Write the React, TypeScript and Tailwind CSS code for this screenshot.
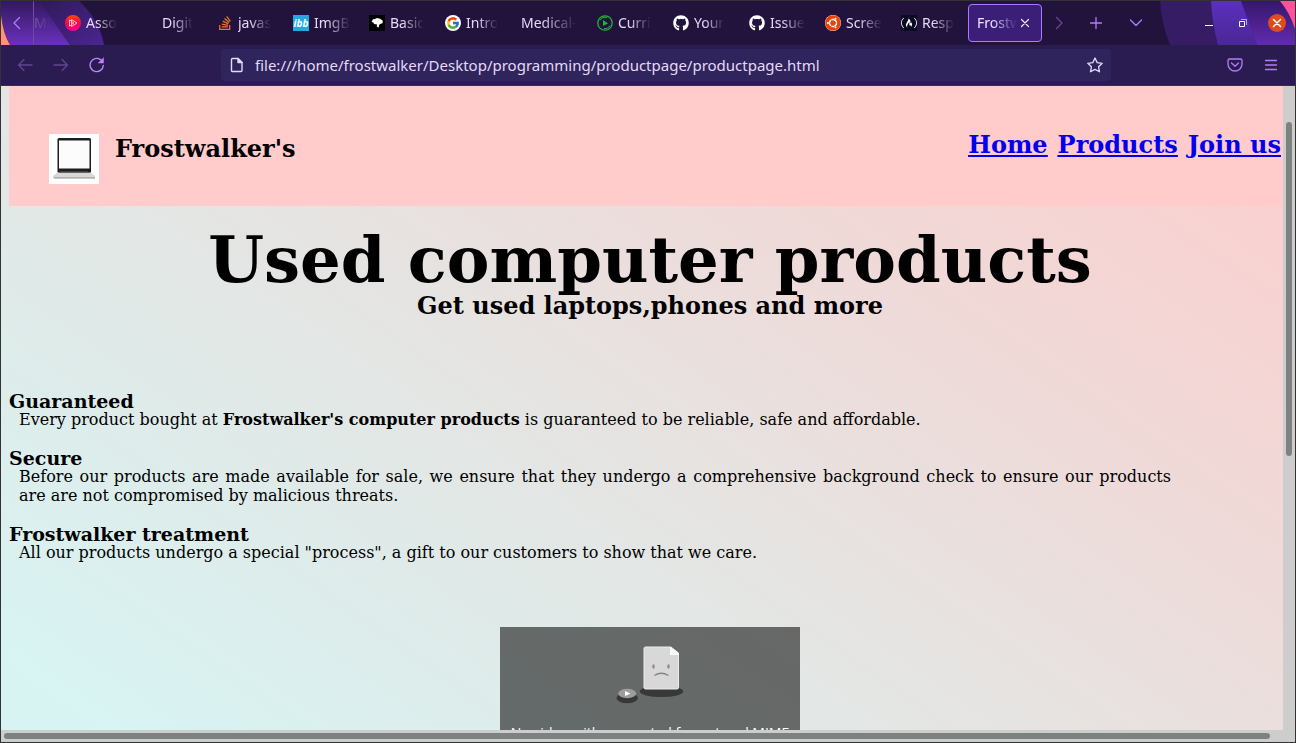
import type { ReactNode } from "react";
import { FaFreeCodeCamp, FaGithub, FaStackOverflow, FaUbuntu } from "react-icons/fa";
import { FcGoogle } from "react-icons/fc";

type Tab = { title: string; icon?: ReactNode; iconSlot?: boolean };

const strokeProps = {
  fill: "none",
  stroke: "currentColor",
  strokeLinecap: "round" as const,
  strokeLinejoin: "round" as const,
};

function PlayBadge() {
  return (
    <svg viewBox="0 0 16 16" className="size-4">
      <defs>
        <linearGradient id="play-badge" x1="0" y1="0" x2="0" y2="1">
          <stop offset="0" stopColor="#ff4a00" />
          <stop offset="0.5" stopColor="#ff0450" />
          <stop offset="1" stopColor="#fb0090" />
        </linearGradient>
      </defs>
      <circle cx="8" cy="8" r="8" fill="url(#play-badge)" />
      <path d="M4.500 5v6M6.500 4.500v7L12 8zM6.500 6.500 9 8 6.500 9.500M4.500 5l2 1M4.500 11l2-1" fill="none" stroke="#ffc7cf" strokeWidth="1" />
    </svg>
  );
}

function HeadBadge() {
  return (
    <svg viewBox="0 0 16 16" className="size-4">
      <rect width="16" height="16" fill="#000" />
      <path d="M2.500 7 4 4.300 6 4l2-1 3 .8 2.800 2-.3 2.400-2.500.8-1 1.200-.2 2.300-2-.8L8 9.600 5 9l-.5-1.500z" fill="#fff" />
    </svg>
  );
}

function GreenBadge() {
  return (
    <svg viewBox="0 0 16 16" className="size-4" fill="none" stroke="#22b53a">
      <circle cx="8" cy="8" r="7.200" strokeWidth="1.300" />
      <path d="M3 5a6 6 0 0 1 7-2.300M13 10.500a6 6 0 0 1-6 3" strokeWidth="1" />
      <path d="M6 5v6l5-2.500z" fill="#22b53a" stroke="none" />
    </svg>
  );
}

const tabs: Tab[] = [
  { title: "Asso", icon: <PlayBadge /> },
  { title: "Digit", iconSlot: true },
  { title: "javas", icon: <FaStackOverflow className="size-4 text-[#e87722]" /> },
  {
    title: "ImgB",
    icon: (
      <span className="flex size-4 items-center justify-center bg-[#23a8e0] text-[10px] font-bold italic leading-none text-white">
        ibb
      </span>
    ),
  },
  { title: "Basic", icon: <HeadBadge /> },
  {
    title: "Intro",
    icon: (
      <span className="flex size-4 items-center justify-center rounded-full bg-white">
        <FcGoogle className="size-[14px]" />
      </span>
    ),
  },
  { title: "Medical-" },
  { title: "Curri", icon: <GreenBadge /> },
  { title: "Your", icon: <FaGithub className="size-4 text-white" /> },
  { title: "Issue", icon: <FaGithub className="size-4 text-white" /> },
  {
    title: "Scree",
    icon: (
      <span className="size-4 rounded-full bg-white">
        <FaUbuntu className="size-4 text-[#e8430c]" />
      </span>
    ),
  },
  {
    title: "Resp",
    icon: (
      <span className="flex size-4 items-center justify-center bg-[#0a0a23]">
        <FaFreeCodeCamp className="size-4 text-white" />
      </span>
    ),
  },
];

const fade = "[mask-image:linear-gradient(to_right,black_35%,transparent)]";

function ThemeArt() {
  return (
    <div aria-hidden="true" className="absolute inset-0 flex justify-between overflow-hidden">
      <svg viewBox="0 0 130 85" className="h-[85px] w-[130px]">
        <defs>
          <linearGradient id="art-left" x1="0" y1="0" x2="0" y2="1">
            <stop offset="0" stopColor="#32185f" />
            <stop offset="1" stopColor="#6a31bc" />
          </linearGradient>
          <linearGradient id="art-mid" x1="0" y1="0" x2="1" y2="1">
            <stop offset="0" stopColor="#301959" />
            <stop offset="1" stopColor="#4b2591" />
          </linearGradient>
        </defs>
        <path d="M37 0h41q20 18 25 44H69z" fill="url(#art-mid)" />
        <path d="M0 0h38l31 44H9Q2 30 0 14z" fill="url(#art-left)" />
        <path d="M0 14q2 18 9 30H0z" fill="#ff9178" />
      </svg>
      <svg viewBox="0 0 145 85" className="h-[85px] w-[145px]">
        <defs>
          <linearGradient id="art-right" x1="0" y1="0" x2="0" y2="1">
            <stop offset="0" stopColor="#35176c" />
            <stop offset="1" stopColor="#622bb0" />
          </linearGradient>
          <linearGradient id="art-band" x1="0" y1="0" x2="0" y2="1">
            <stop offset="0" stopColor="#5b30bd" />
            <stop offset="1" stopColor="#4a2796" />
          </linearGradient>
        </defs>
        <path d="M10 0h55l8 44H20Q11 21 10 0z" fill="#351c65" />
        <path d="M61 0h31l15 44H68Q62 22 61 0z" fill="url(#art-band)" />
        <path d="M91 0h54v44h-38z" fill="url(#art-right)" />
        <path d="M130 0h15v28q-5-16-15-28z" fill="#ff5299" />
      </svg>
    </div>
  );
}

function TabBar() {
  return (
    <div className="relative flex h-11 items-center bg-[#22133d]">
      <ThemeArt />
      <button aria-label="Scroll tabs left" className="relative flex h-11 w-8 items-center justify-center text-[#b47bff]">
        <svg viewBox="0 0 16 16" className="size-4" strokeWidth="1.300" {...strokeProps}>
          <path d="M10.500 2.500 5 8l5.500 5.500" />
        </svg>
      </button>
      <div className="relative flex h-11 w-[23px] shrink-0 items-center border-l border-[#6f4d9e] text-sm text-[#7a5ca8]">
        <span className="[mask-image:linear-gradient(to_right,black,transparent)]">Mi</span>
      </div>
      <div role="tablist" className="relative flex items-center">
        {tabs.map((tab) => (
          <button key={tab.title} role="tab" aria-selected="false" className="flex h-10 w-[76px] shrink-0 items-center gap-[5px] px-[9px]">
            {(tab.icon || tab.iconSlot) && <span className="flex size-4 shrink-0">{tab.icon}</span>}
            <span className={`whitespace-nowrap text-left text-sm text-[#e4daf7] ${fade}`}>{tab.title}</span>
          </button>
        ))}
        <div role="tab" aria-selected="true" className="flex h-[38px] w-[74px] shrink-0 items-center rounded border border-[#b077ff] bg-[#3a1e78] pl-2">
          <span className={`w-10 whitespace-nowrap text-sm text-[#f0e8ff] ${fade}`}>Frostw</span>
          <button aria-label="Close tab" className="flex size-4 items-center justify-center text-[#f0e8ff]">
            <svg viewBox="0 0 16 16" className="size-4" strokeWidth="1.200" {...strokeProps}>
              <path d="m4.500 4.500 7 7m0-7-7 7" />
            </svg>
          </button>
        </div>
      </div>
      <div className="relative flex flex-1 items-center text-[#b47bff]">
        <button aria-label="Scroll tabs right" className="flex w-[34px] justify-center text-[#6b4699]">
          <svg viewBox="0 0 16 16" className="size-4" strokeWidth="1.300" {...strokeProps}>
            <path d="m5.500 2.500 5.500 5.500-5.500 5.500" />
          </svg>
        </button>
        <button aria-label="New tab" className="flex w-10 justify-center">
          <svg viewBox="0 0 16 16" className="size-4" strokeWidth="1.300" {...strokeProps}>
            <path d="M8 2.500v11M2.500 8h11" />
          </svg>
        </button>
        <button aria-label="List all tabs" className="flex w-10 justify-center">
          <svg viewBox="0 0 16 16" className="size-4" strokeWidth="1.300" {...strokeProps}>
            <path d="m2.500 5 5.500 5.500L13.500 5" />
          </svg>
        </button>
      </div>
      <div className="relative flex items-center gap-4 pr-[9px] text-white">
        <button aria-label="Minimize" className="flex size-[18px] items-center justify-center">
          <svg viewBox="0 0 18 18" className="size-[18px]"><path d="M5 11.500h8" stroke="currentColor" /></svg>
        </button>
        <button aria-label="Restore" className="flex size-[18px] items-center justify-center">
          <svg viewBox="0 0 18 18" className="size-[18px]" fill="none" stroke="currentColor">
            <path d="M5.500 7.500h5v5h-5z" />
            <path d="M7 5.500h5.500V11" opacity=".6" />
          </svg>
        </button>
        <button aria-label="Close window" className="flex size-[18px] items-center justify-center rounded-full bg-[#e14a1a]">
          <svg viewBox="0 0 18 18" className="size-[18px]" strokeWidth="1.500" {...strokeProps}>
            <path d="m5.500 5.500 7 7m0-7-7 7" />
          </svg>
        </button>
      </div>
    </div>
  );
}

function Toolbar() {
  return (
    <div className="flex h-[41px] items-center border-b border-[#3b2668] bg-[#2a1c50] text-[#b47bff]">
      <div className="flex w-[220px] shrink-0 items-center gap-5 pl-4">
        <button aria-label="Back" className="text-[#63458f]">
          <svg viewBox="0 0 16 16" className="size-4" strokeWidth="1.300" {...strokeProps}>
            <path d="M15 8H1.500M7 2.500 1.500 8 7 13.500" />
          </svg>
        </button>
        <button aria-label="Forward" className="text-[#63458f]">
          <svg viewBox="0 0 16 16" className="size-4" strokeWidth="1.300" {...strokeProps}>
            <path d="M1 8h13.500M9 2.500 14.500 8 9 13.500" />
          </svg>
        </button>
        <button aria-label="Reload" className="text-[#bd84ff]">
          <svg viewBox="0 0 16 16" className="size-4" strokeWidth="1.400" {...strokeProps}>
            <path d="M14.300 8.500A6.600 6.600 0 1 1 11.500 2.600L13 4" />
            <path d="M14.500 1v5h-5z" fill="currentColor" strokeWidth=".5" />
          </svg>
        </button>
      </div>
      <div className="flex h-8 min-w-0 flex-1 items-center rounded bg-[#2f245b] px-2 text-[#e4daf7]">
        <svg viewBox="0 0 16 16" className="size-4 shrink-0" strokeWidth="1.400" {...strokeProps}>
          <path d="M3.500 1.500H9L13 5.500v8a1 1 0 0 1-1 1H3.500a1 1 0 0 1-1-1v-11a1 1 0 0 1 1-1z" />
          <path d="M9 1.500v4h4z" fill="currentColor" />
        </svg>
        <input
          aria-label="Address"
          defaultValue="file:///home/frostwalker/Desktop/programming/productpage/productpage.html"
          className="ml-[10px] min-w-0 flex-1 bg-transparent text-[15px] outline-none"
        />
        <button aria-label="Bookmark this page">
          <svg viewBox="0 0 16 16" className="size-4" strokeWidth="1.300" {...strokeProps}>
            <path d="m8 1 2.200 4.600 5 .7-3.600 3.500.9 5L8 12.400l-4.500 2.400.9-5L.8 6.300l5-.7z" />
          </svg>
        </button>
      </div>
      <div className="flex w-[184px] shrink-0 items-center justify-end gap-5 pr-4">
        <button aria-label="Save to Pocket">
          <svg viewBox="0 0 16 16" className="size-4" strokeWidth="1.300" {...strokeProps}>
            <path d="M2.500 2h11a1.500 1.500 0 0 1 1.500 1.500V7A7 7 0 0 1 1 7V3.500A1.500 1.500 0 0 1 2.500 2z" />
            <path d="M4.500 6 8 9.200 11.500 6" />
          </svg>
        </button>
        <button aria-label="Open application menu">
          <svg viewBox="0 0 16 16" className="size-4" strokeWidth="1.300" {...strokeProps}>
            <path d="M2.500 3.500h11M2.500 8h11M2.500 12.500h11" />
          </svg>
        </button>
      </div>
    </div>
  );
}

function LaptopLogo() {
  return (
    <svg viewBox="0 0 50 50" className="size-[50px]" role="img" aria-label="Laptop">
      <rect width="50" height="50" fill="#fff" />
      <rect x="8.500" y="4" width="33.500" height="35" rx="1.500" fill="#1d1d1d" />
      <rect x="10" y="6.500" width="30.500" height="28" fill="#fcfcfc" />
      <path d="M8.500 38.500h33l4.500 3.500v2H4v-2z" fill="#d8d8d8" />
      <path d="M11 37.500h28l1 1.500H10z" fill="#666" />
      <path d="M5 44h41" stroke="#777" strokeWidth=".8" />
    </svg>
  );
}

function SadFile() {
  return (
    <svg viewBox="0 0 68 60" className="h-[60px] w-[68px]" aria-hidden="true">
      <ellipse cx="45.500" cy="46.500" rx="21.700" ry="5.500" fill="#383838" />
      <path d="M30 2h25l7.500 6v34.500a1.500 1.500 0 0 1-1.500 1.500H29.500a1.500 1.500 0 0 1-1.500-1.500V3.500A1.500 1.500 0 0 1 29.500 2z" fill="#d8d8d8" stroke="#ececec" strokeWidth="1" />
      <path d="M54 2v8h9z" fill="#fafafa" />
      <path d="M54 2v8h8.500V8z" fill="#fafafa" />
      <ellipse cx="37.500" cy="21.500" rx="1.200" ry="2.200" fill="#8a8a8a" />
      <ellipse cx="52.500" cy="21.500" rx="1.200" ry="2.200" fill="#8a8a8a" />
      <path d="M38.500 30.500q6.500-4.500 14 0" fill="none" stroke="#858585" strokeWidth="1.400" />
      <ellipse cx="11.200" cy="53" rx="10.700" ry="5.200" fill="#383838" />
      <ellipse cx="11.200" cy="48.500" rx="9" ry="4.700" fill="#9d9d9d" />
      <path d="M9 46v5l5.500-2.500z" fill="#fff" />
    </svg>
  );
}

function Feature({ title, children }: { title: string; children: ReactNode }) {
  return (
    <section>
      <h3 className="text-[19px] font-bold leading-[18px]">{title}</h3>
      <p className="ml-[10px] mr-[120px] text-justify text-base leading-[19px]">{children}</p>
    </section>
  );
}

function ProductPage() {
  return (
    <main className="min-w-0 flex-1 overflow-hidden bg-[linear-gradient(35deg,#d7f4f3_4%,#e5e4e2_46%,#fccdcc_100%)] pl-2 font-['DejaVu_Serif',serif] text-black">
      <div className="-mr-2">
        <header className="flex h-[120px] items-start justify-between bg-[#ffcccb] pl-10 pr-[10px] font-bold">
          <div className="flex gap-4 pt-12">
            <LaptopLogo />
            <h2 className="text-2xl leading-[30px]">Frostwalker's</h2>
          </div>
          <nav className="flex gap-[10px] pt-11 text-2xl leading-[30px] text-[#0000ee] underline">
            <a href="#home">Home</a>
            <a href="#products">Products</a>
            <a href="#join">Join us</a>
          </nav>
        </header>
        <div className="pt-[22px] text-center font-bold">
          <h1 className="text-[64px] leading-[64px]">Used computer products</h1>
          <h2 className="text-2xl leading-7">Get used laptops,phones and more</h2>
        </div>
        <div className="flex flex-col gap-5 pt-[72px]">
          <Feature title="Guaranteed">
            Every product bought at <b>Frostwalker's computer products</b> is guaranteed to be reliable, safe and affordable.
          </Feature>
          <Feature title="Secure">
            Before our products are made available for sale, we ensure that they undergo a comprehensive background check to
            ensure our products are are not compromised by malicious threats.
          </Feature>
          <Feature title="Frostwalker treatment">
            All our products undergo a special "process", a gift to our customers to show that we care.
          </Feature>
        </div>
        <div className="mx-auto mt-[65px] flex h-[150px] w-[300px] flex-col items-center bg-black/55 pt-[18px] font-['Open_Sans',sans-serif]">
          <SadFile />
          <p className="mt-[18px] whitespace-nowrap text-sm leading-5 text-white">No video with supported format and MIME</p>
        </div>
      </div>
    </main>
  );
}

export default function App() {
  return (
    <div className="flex h-screen flex-col overflow-hidden border border-[#333333] bg-[#cdcdcd] font-['Noto_Sans',sans-serif]">
      <TabBar />
      <Toolbar />
      <div className="flex min-h-0 flex-1">
        <ProductPage />
        <div className="flex w-3 shrink-0 flex-col items-center pt-9">
          <div className="h-[55%] w-[6px] rounded-full bg-[#7c8280]" />
        </div>
      </div>
      <div className="flex h-3 shrink-0 items-center pl-[3px] pr-[25px]">
        <div className="h-[6px] flex-1 rounded-full bg-[#7c8280]" />
      </div>
    </div>
  );
}
